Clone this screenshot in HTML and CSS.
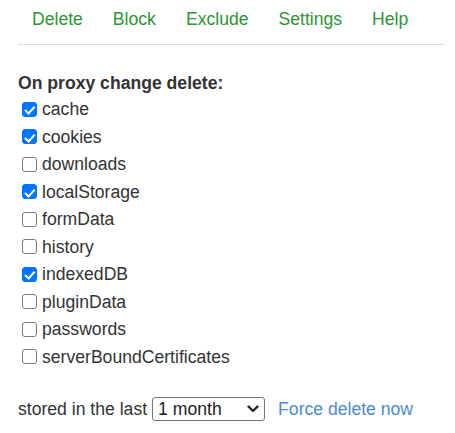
FILE: index.html
```html
<!DOCTYPE html>
<html>
<head>
<meta charset="utf-8">
<link rel="stylesheet" href="styles.css">
</head>
<body>
<nav class="nav">
  <a class="nav-item">Delete</a>
  <a class="nav-item">Block</a>
  <a class="nav-item">Exclude</a>
  <a class="nav-item">Settings</a>
  <a class="nav-item">Help</a>
</nav>
<h3 class="heading">On proxy change delete:</h3>
<div class="list">
  <label class="row"><input class="cb" type="checkbox" checked><span>cache</span></label>
  <label class="row"><input class="cb" type="checkbox" checked><span>cookies</span></label>
  <label class="row"><input class="cb" type="checkbox"><span>downloads</span></label>
  <label class="row"><input class="cb" type="checkbox" checked><span>localStorage</span></label>
  <label class="row"><input class="cb" type="checkbox"><span>formData</span></label>
  <label class="row"><input class="cb" type="checkbox"><span>history</span></label>
  <label class="row"><input class="cb" type="checkbox" checked><span>indexedDB</span></label>
  <label class="row"><input class="cb" type="checkbox"><span>pluginData</span></label>
  <label class="row"><input class="cb" type="checkbox"><span>passwords</span></label>
  <label class="row"><input class="cb" type="checkbox"><span>serverBoundCertificates</span></label>
</div>
<div class="bottom">
  <span>stored in the last</span>
  <span class="select-wrap">
    <select class="select">
      <option>1 month</option>
    </select>
    <svg class="chev" width="12" height="8" viewBox="0 0 12 8"><polyline points="1.5,1.5 6,6 10.5,1.5" fill="none" stroke="#222" stroke-width="2.4" stroke-linecap="round" stroke-linejoin="round"/></svg>
  </span>
  <a class="force">Force delete now</a>
</div>
</body>
</html>
```

FILE: styles.css
```css
html, body {
  margin: 0;
  padding: 0;
  background: #fff;
}
body {
  padding: 0 10px 0 18px;
  font-family: "Liberation Sans", Arial, sans-serif;
  font-size: 17.6px;
  color: #333;
}
.nav {
  display: flex;
  gap: 30px;
  padding: 9px 0 15px 14px;
  line-height: 20px;
  border-bottom: 1px solid #dedede;
}
.nav-item {
  color: #2f9433;
  text-decoration: none;
}
.heading {
  margin: 28px 0 0 0;
  font-size: 17.6px;
  font-weight: bold;
  line-height: 20px;
  color: #333;
}
.list {
  display: flex;
  flex-direction: column;
  margin-top: 3.2px;
}
.row {
  display: flex;
  align-items: center;
  height: 27.5px;
  line-height: 27.5px;
}
.cb {
  appearance: none;
  -webkit-appearance: none;
  position: relative;
  flex: 0 0 auto;
  box-sizing: border-box;
  width: 15px;
  height: 15px;
  margin: 0 5px 1px 4px;
  border: 1px solid #7a7a7a;
  border-radius: 3px;
  background: #fff;
}
.cb:checked {
  background: #0075ff;
  border-color: #0075ff;
}
.cb:checked::after {
  content: "";
  position: absolute;
  left: 4.2px;
  top: 1.2px;
  width: 3.6px;
  height: 7.6px;
  border: solid #fff;
  border-width: 0 2.3px 2.3px 0;
  transform: rotate(42deg);
}
.bottom {
  display: flex;
  align-items: center;
  margin-top: 25.8px;
  height: 24px;
  line-height: 24px;
}
.select-wrap {
  position: relative;
  display: inline-flex;
  margin-left: 5px;
}
.select {
  appearance: none;
  -webkit-appearance: none;
  width: 113px;
  height: 24px;
  padding: 0 0 0 5px;
  border: 1px solid #767676;
  border-radius: 3px;
  background: #fff;
  font-family: "Liberation Sans", Arial, sans-serif;
  font-size: 17.6px;
  color: #222;
}
.chev {
  position: absolute;
  left: 95px;
  top: 8px;
  pointer-events: none;
}
.force {
  margin-left: 13px;
  color: #4a8bd6;
  text-decoration: none;
}
```
